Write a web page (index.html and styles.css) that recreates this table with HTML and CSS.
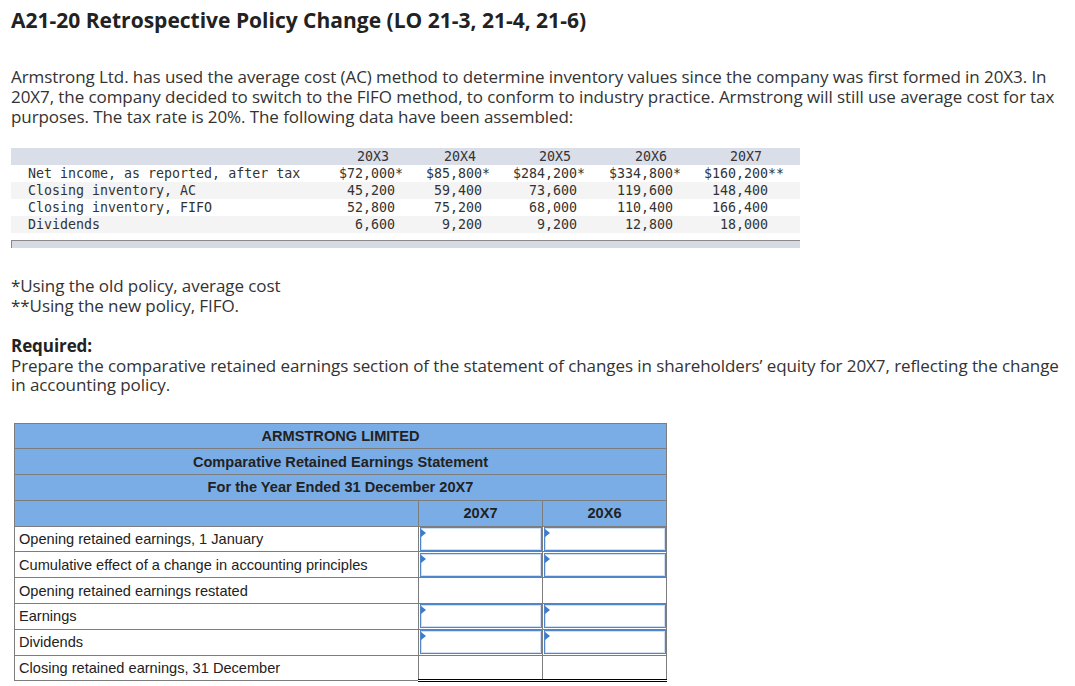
FILE: index.html
```html
<!DOCTYPE html>
<html lang="en">
<head>
<meta charset="utf-8">
<title>A21-20 Retrospective Policy Change</title>
<link rel="stylesheet" href="styles.css">
</head>
<body>
<h1 class="title">A21-20 Retrospective Policy Change (LO 21-3, 21-4, 21-6)</h1>
<p class="intro">Armstrong Ltd. has used the average cost (AC) method to determine inventory values since the company was first formed in 20X3. In 20X7, the company decided to switch to the FIFO method, to conform to industry practice. Armstrong will still use average cost for tax purposes. The tax rate is 20%. The following data have been assembled:</p>

<div class="data">
  <div class="drow dhead">
    <div class="dlabel"></div>
    <div class="dyear">20X3</div>
    <div class="dyear">20X4</div>
    <div class="dyear">20X5</div>
    <div class="dyear">20X6</div>
    <div class="dyear">20X7</div>
  </div>
  <div class="drow">
    <div class="dlabel">Net income, as reported, after tax</div>
    <div class="dnum">$72,000<span class="sfx">*</span></div>
    <div class="dnum">$85,800<span class="sfx">*</span></div>
    <div class="dnum">$284,200<span class="sfx">*</span></div>
    <div class="dnum">$334,800<span class="sfx">*</span></div>
    <div class="dnum">$160,200<span class="sfx">**</span></div>
  </div>
  <div class="drow alt">
    <div class="dlabel">Closing inventory, AC</div>
    <div class="dnum">45,200</div>
    <div class="dnum">59,400</div>
    <div class="dnum">73,600</div>
    <div class="dnum">119,600</div>
    <div class="dnum">148,400</div>
  </div>
  <div class="drow">
    <div class="dlabel">Closing inventory, FIFO</div>
    <div class="dnum">52,800</div>
    <div class="dnum">75,200</div>
    <div class="dnum">68,000</div>
    <div class="dnum">110,400</div>
    <div class="dnum">166,400</div>
  </div>
  <div class="drow alt">
    <div class="dlabel">Dividends</div>
    <div class="dnum">6,600</div>
    <div class="dnum">9,200</div>
    <div class="dnum">9,200</div>
    <div class="dnum">12,800</div>
    <div class="dnum">18,000</div>
  </div>
</div>
<div class="scrollbar"></div>

<p class="notes">*Using the old policy, average cost<br>**Using the new policy, FIFO.</p>

<p class="required"><strong>Required:</strong><br>Prepare the comparative retained earnings section of the statement of changes in shareholders’ equity for 20X7, reflecting the change in accounting policy.</p>

<table class="stmt">
  <colgroup>
    <col class="c-label">
    <col class="c-val">
    <col class="c-val">
  </colgroup>
  <tr class="hrow"><th colspan="3">ARMSTRONG LIMITED</th></tr>
  <tr class="hrow"><th colspan="3">Comparative Retained Earnings Statement</th></tr>
  <tr class="hrow"><th colspan="3">For the Year Ended 31 December 20X7</th></tr>
  <tr class="hrow"><th></th><th>20X7</th><th>20X6</th></tr>
  <tr>
    <td class="lbl">Opening retained earnings, 1 January</td>
    <td class="val"><div class="inp"></div></td>
    <td class="val"><div class="inp"></div></td>
  </tr>
  <tr>
    <td class="lbl">Cumulative effect of a change in accounting principles</td>
    <td class="val"><div class="inp"></div></td>
    <td class="val"><div class="inp"></div></td>
  </tr>
  <tr>
    <td class="lbl">Opening retained earnings restated</td>
    <td class="val total"></td>
    <td class="val total"></td>
  </tr>
  <tr>
    <td class="lbl">Earnings</td>
    <td class="val"><div class="inp"></div></td>
    <td class="val"><div class="inp"></div></td>
  </tr>
  <tr>
    <td class="lbl">Dividends</td>
    <td class="val"><div class="inp"></div></td>
    <td class="val"><div class="inp"></div></td>
  </tr>
  <tr>
    <td class="lbl">Closing retained earnings, 31 December</td>
    <td class="val total grand"></td>
    <td class="val total grand"></td>
  </tr>
</table>
</body>
</html>
```

FILE: styles.css
```css
html, body {
  background: #ffffff;
}

body {
  margin: 0;
  padding: 0 11px;
  font-family: "Open Sans", "Liberation Sans", sans-serif;
  color: #333333;
}

.title {
  margin: 7px 0 0;
  font-size: 21px;
  line-height: 26px;
  font-weight: 700;
  color: #222222;
}

.intro {
  margin: 34px 0 0;
  font-size: 17px;
  line-height: 20px;
  letter-spacing: -0.08px;
}

/* data table */
.data {
  margin-top: 21px;
  width: 789px;
  font-family: "DejaVu Sans Mono", "Liberation Mono", monospace;
  font-size: 13.3px;
  color: #333333;
}

.drow {
  display: grid;
  grid-template-columns: 310px 90px 87px 95px 96px 95px;
  height: 17px;
  line-height: 17px;
  white-space: nowrap;
}

.dhead {
  background: #dadee8;
}

.alt {
  background: #f4f4f4;
}

.dlabel {
  padding-left: 17px;
}

.dnum {
  text-align: right;
  padding-right: 16px;
}

.dyear {
  text-align: right;
  padding-right: 22px;
}

.sfx {
  display: inline-block;
  width: 0;
  text-align: left;
}

.scrollbar {
  margin-top: 7px;
  width: 788px;
  height: 7px;
  border-top: 1px solid #8a8a8a;
  border-left: 1px solid #8a8a8a;
  background: #d5dae3;
}

.notes {
  margin: 28px 0 0;
  font-size: 17px;
  line-height: 20px;
  letter-spacing: -0.08px;
}

.required {
  margin: 20px 0 0;
  font-size: 17px;
  line-height: 19.5px;
  letter-spacing: -0.08px;
}

.required strong {
  font-weight: 700;
  color: #222222;
}

/* statement table */
.stmt {
  margin: 28px 0 0 3px;
  border-collapse: collapse;
  table-layout: fixed;
  width: 653px;
  font-family: "Liberation Sans", Arial, sans-serif;
  font-size: 14.6px;
  color: #222222;
}

.c-label { width: 404px; }
.c-val { width: 124px; }

.stmt tr {
  height: 25.8px;
}

.stmt th,
.stmt td {
  border: 1px solid #7d7d7d;
  padding: 0;
}

.hrow th {
  background: #7aade6;
  font-weight: 700;
  text-align: center;
}

.lbl {
  padding-left: 4px !important;
  text-align: left;
}

.val {
  position: relative;
}

.inp {
  height: 22px;
  margin: 0 0 0 1px;
  border: 1px solid #4f86cc;
  box-shadow: inset 0 0 0 1px #cfdff4;
  background: #ffffff;
  position: relative;
}

.inp::before {
  content: "";
  position: absolute;
  left: 0;
  top: 1px;
  border-top: 4px solid transparent;
  border-bottom: 4px solid transparent;
  border-left: 5px solid #3d7bd0;
}

.total {
  border-top: 1px solid #000000 !important;
}

.grand {
  border-bottom: 3px double #000000 !important;
}
```
